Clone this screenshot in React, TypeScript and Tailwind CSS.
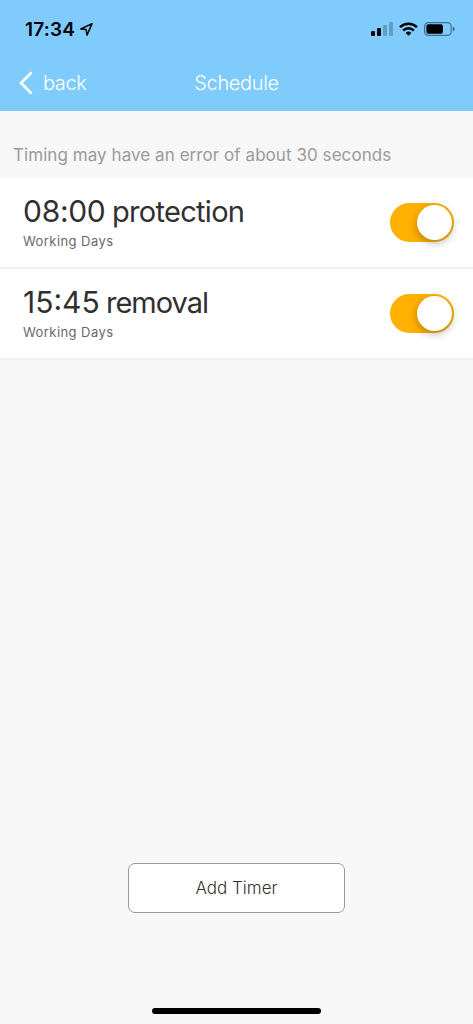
import { type FC } from 'react';

const timers = [
  { time: '08:00', action: 'protection', days: 'Working Days', timeStyle: 'w-[82px] tracking-[-0.3px]', actionStyle: 'tracking-[-0.7px]' },
  { time: '15:45', action: 'removal', days: 'Working Days', timeStyle: 'w-[76px]', actionStyle: 'tracking-[-1px]' },
];

const StatusBar: FC = () => (
  <div className="flex h-[58px] items-center justify-between pl-[25px] pr-[18px]">
    <div className="flex items-center gap-[5px]">
      <span className="text-[19px] font-semibold leading-none tracking-[0.2px] text-black">17:34</span>
      <svg width="13" height="13" viewBox="0 0 13 13" fill="none" stroke="black" strokeWidth="1.5" strokeLinejoin="round">
        <path d="M12 .8 .8 5.9l5.3.6.9 5.6Z" />
      </svg>
    </div>
    <div className="flex items-center">
      {/* Signal */}
      <svg width="22" height="14" viewBox="0 0 22 14">
        <rect x="0" y="9" width="4" height="5" rx="1.2" />
        <rect x="6" y="6" width="4" height="8" rx="1.2" />
        <rect x="12" y="3" width="4" height="11" rx="1.2" opacity="0.22" />
        <rect x="18" y="0" width="4" height="14" rx="1.2" opacity="0.22" />
      </svg>
      {/* Wi-Fi */}
      <svg className="ml-[6px]" width="19" height="14" viewBox="0 0 19 14" fill="none" stroke="black" strokeWidth="2.5">
        <path d="M1 5.2a12.2 12.2 0 0 1 17 0" />
        <path d="M4.2 8.5a7.6 7.6 0 0 1 10.6 0" />
        <path d="M6.6 10.9a4.2 4.2 0 0 1 5.8 0L9.5 13.8Z" fill="black" stroke="none" />
      </svg>
      {/* Battery */}
      <svg className="ml-[6px]" width="31" height="14" viewBox="0 0 31 14">
        <rect x="0.6" y="0.6" width="26.6" height="12.8" rx="3.8" fill="none" stroke="black" strokeOpacity="0.45" strokeWidth="1.2" />
        <rect x="2.4" y="2.3" width="16.5" height="9.4" rx="2" />
        <path d="M28.8 4.7c2.4.9 2.4 3.7 0 4.6Z" opacity="0.5" />
      </svg>
    </div>
  </div>
);

const Toggle: FC<{ label: string }> = ({ label }) => (
  <button
    role="switch"
    aria-checked="true"
    aria-label={label}
    className="flex h-[39px] w-[64px] items-center justify-end rounded-full bg-[#ffb000] pr-[2px]"
  >
    <span className="size-[35px] rounded-full bg-white shadow-[0_3px_9px_rgba(0,0,0,0.28)]" />
  </button>
);

export default function App() {
  return (
    <div className="flex h-[1024px] w-[473px] flex-col bg-[#f7f7f7] font-['Inter','Liberation_Sans',sans-serif]">
      <header className="h-[111px] bg-[#7ecbfc]">
        <StatusBar />
        <div className="grid h-[50px] grid-cols-[1fr_auto_1fr] items-center text-[20px] font-[350] text-white">
          <button className="flex items-center gap-[10px] pl-[19px]">
            <svg width="14" height="24" viewBox="0 0 14 24" fill="none" stroke="white" strokeWidth="2.7">
              <path d="M12.5 1.5 2 12l10.5 10.5" />
            </svg>
            <span className="tracking-[-0.4px]">back</span>
          </button>
          <h1 className="tracking-[-0.35px]">Schedule</h1>
        </div>
      </header>

      <p className="h-[67px] pl-[13px] pt-[31px] text-[17px] leading-[26px] tracking-[0.06px] text-[#9b9b9b]">
        Timing may have an error of about 30 seconds
      </p>

      <ul>
        {timers.map(({ time, action, days, timeStyle, actionStyle }) => (
          <li
            key={time}
            className="flex h-[91px] items-center justify-between border-b-2 border-[#f2f2f2] bg-white pl-[23px] pr-[19px]"
          >
            <div className="pb-[2px]">
              <h2 className="flex items-baseline gap-[7px] text-[30px] leading-[36px] text-[#303030]">
                <span className={timeStyle}>{time}</span>
                <span className={`text-[29px] ${actionStyle}`}>{action}</span>
              </h2>
              <p className="mt-[1px] text-[13px] leading-[20px] tracking-[0.43px] text-[#686868]">{days}</p>
            </div>
            <Toggle label={`${time} ${action}`} />
          </li>
        ))}
      </ul>

      <div className="mt-auto flex flex-col items-center pb-[10px]">
        <button className="h-[50px] w-[217px] rounded-[7px] border border-[#999] bg-white pt-[2px] text-[17px] font-light text-[#333]">
          Add Timer
        </button>
        <div className="mt-[95px] h-[6px] w-[169px] rounded-full bg-black" />
      </div>
    </div>
  );
}
